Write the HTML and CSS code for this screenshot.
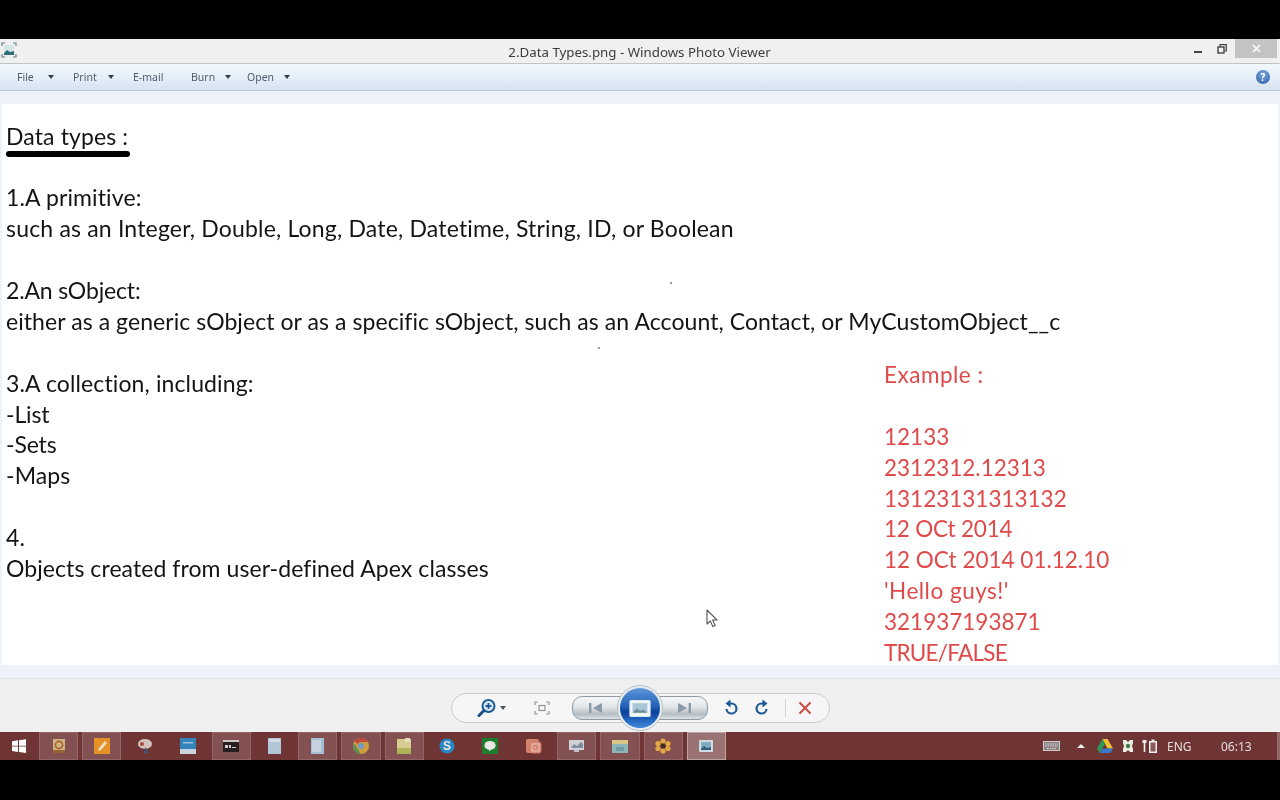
FILE: index.html
```html
<!DOCTYPE html>
<html lang="en">
<head>
<meta charset="utf-8">
<title>2.Data Types.png - Windows Photo Viewer</title>
<link rel="stylesheet" href="styles.css">
</head>
<body>
<div class="screen">
  <div class="letterbox-top"></div>
  <div class="window">
    <header class="titlebar">
      <svg class="app-icon" width="16" height="16" viewBox="0 0 16 16"><path d="M1 4V1h3M12 1h3v3M15 12v3h-3M4 15H1v-3" fill="none" stroke="#6d7f80" stroke-width="1.2"/><rect x="3" y="3" width="10" height="10" fill="#d5e6e6"/><path d="M3 11l3-3 3 2 4-1v4H3z" fill="#2f6f78"/></svg>
      <div class="title">2.Data Types.png - Windows Photo Viewer</div>
      <div class="window-controls">
        <div class="win-btn"><span class="min-glyph"></span></div>
        <div class="win-btn"><svg width="10" height="10" viewBox="0 0 10 10"><path d="M3 2.5V.7h6.3V7H7.5" fill="none" stroke="#444" stroke-width="1.2"/><rect x="1" y="3" width="6" height="6" fill="none" stroke="#444" stroke-width="1.4"/></svg></div>
        <div class="win-btn close"><svg width="9" height="9" viewBox="0 0 9 9"><path d="M1 1l7 7M8 1L1 8" stroke="#fff" stroke-width="1.5"/></svg></div>
      </div>
    </header>
    <nav class="menubar">
      <div class="menu-item file">File<i class="caret"></i></div>
      <div class="menu-item print">Print<i class="caret"></i></div>
      <div class="menu-item email">E-mail</div>
      <div class="menu-item burn">Burn<i class="caret"></i></div>
      <div class="menu-item open">Open<i class="caret"></i></div>
      <div class="help">?</div>
    </nav>
    <main class="viewer">
      <div class="page">
        <div class="col-left">
          <div class="line heading">Data types :</div>
          <div class="underline"></div>
          <div class="line gap-after-heading">1.A primitive:</div>
          <div class="line stretch">such as an Integer, Double, Long, Date, Datetime, String, ID, or Boolean</div>
          <div class="line blank"></div>
          <div class="line tighten">2.An sObject:</div>
          <div class="line squeeze">either as a generic sObject or as a specific sObject, such as an Account, Contact, or MyCustomObject__c</div>
          <div class="line blank"></div>
          <div class="line">3.A collection, including:</div>
          <div class="line tighten">-List</div>
          <div class="line tighten">-Sets</div>
          <div class="line">-Maps</div>
          <div class="line blank"></div>
          <div class="line">4.</div>
          <div class="line squeeze">Objects created from user-defined Apex classes</div>
        </div>
        <div class="col-right">
          <div class="line wider">Example :</div>
          <div class="line blank"></div>
          <div class="line">12133</div>
          <div class="line">2312312.12313</div>
          <div class="line">13123131313132</div>
          <div class="line narrower">12 OCt 2014</div>
          <div class="line">12 OCt 2014 01.12.10</div>
          <div class="line wider">'Hello guys!'</div>
          <div class="line">321937193871</div>
          <div class="line caps">TRUE/FALSE</div>
        </div>
        <span class="speck speck-a"></span>
        <span class="speck speck-b"></span>
        <svg class="cursor" width="14" height="20" viewBox="0 0 14 20"><path d="M1 1v14l3.4-3 2.4 5.6 2.4-1L6.6 11H11z" fill="#fff" stroke="#555" stroke-width="1.1" stroke-linejoin="round"/></svg>
      </div>
    </main>
    <footer class="controls">
      <div class="pill">
        <div class="ctl zoom">
          <svg width="20" height="20" viewBox="0 0 20 20"><circle cx="11.5" cy="8" r="6" fill="#dbeaf7" stroke="#1c5a96" stroke-width="2"/><path d="M7 12.5L2 17.5" stroke="#1c4f86" stroke-width="3" stroke-linecap="round"/><path d="M8.5 8h6M11.5 5v6" stroke="#1c5a96" stroke-width="1.8"/></svg>
          <i class="caret small"></i>
        </div>
        <div class="ctl fit">
          <svg width="16" height="14" viewBox="0 0 16 14"><path d="M1 4V1h3M12 1h3v3M15 10v3h-3M4 13H1v-3" fill="none" stroke="#8d959b" stroke-width="1.2"/><rect x="5" y="4.5" width="6" height="5" fill="none" stroke="#8d959b" stroke-width="1.2"/></svg>
        </div>
        <div class="nav-pill">
          <div class="nav-side"><svg width="16" height="12" viewBox="0 0 16 12"><rect x="1" y="1" width="2.4" height="10" fill="#8a9aa8"/><path d="M14 1v10L5 6z" fill="#8a9aa8"/></svg></div>
          <div class="nav-side next"><svg width="16" height="12" viewBox="0 0 16 12"><rect x="12.6" y="1" width="2.4" height="10" fill="#8a9aa8"/><path d="M2 1v10l9-5z" fill="#8a9aa8"/></svg></div>
          <div class="slideshow"><div class="slideshow-inner"><svg width="22" height="17" viewBox="0 0 20 16"><rect x="0.5" y="0.5" width="19" height="15" rx="1" fill="#f0f5f8" stroke="#dfe8ee"/><rect x="3" y="3" width="14" height="9" fill="#a9c6d6"/><path d="M3 12l4-4 3 2 3-1 4 3z" fill="#6d8f9c"/></svg></div></div>
        </div>
        <div class="ctl rotate">
          <svg width="16" height="18" viewBox="0 0 16 18"><path d="M5 4.5h3.5a5 5 0 1 1-5 5.5" fill="none" stroke="#1c5a96" stroke-width="2.2"/><path d="M7.5 0.5L2.5 4.5l5 4z" fill="#1c5a96"/></svg>
        </div>
        <div class="ctl rotate">
          <svg width="16" height="18" viewBox="0 0 16 18"><path d="M11 4.5H7.5a5 5 0 1 0 5 5.5" fill="none" stroke="#1c5a96" stroke-width="2.2"/><path d="M8.5 0.5l5 4-5 4z" fill="#1c5a96"/></svg>
        </div>
        <div class="divider"></div>
        <div class="ctl del">
          <svg width="14" height="14" viewBox="0 0 14 14"><path d="M1.5 1.5l11 11M12.5 1.5l-11 11" stroke="#cb4a45" stroke-width="2"/></svg>
        </div>
      </div>
    </footer>
  </div>
  <div class="taskbar">
    <div class="start"><svg width="14" height="14" viewBox="0 0 14 14"><path d="M0 2.2l6-.9v5.4H0zM7 1.2l7-1v6.5H7zM0 7.6h6v5.3l-6-.9zM7 7.6h7V14l-7-1z" fill="#fff"/></svg></div>
    <div class="tasks">
      <div class="task on"><svg width="14" height="16" viewBox="0 0 14 16"><rect x="1" y="1" width="12" height="14" fill="#d8c08e"/><circle cx="7" cy="7" r="3.6" fill="none" stroke="#b5651d" stroke-width="1.6"/><rect x="1" y="12" width="12" height="3" fill="#9b6a2c"/></svg></div>
      <div class="task on"><svg width="16" height="16" viewBox="0 0 16 16"><rect width="16" height="16" fill="#f29a1f"/><path d="M4 13l1-3 6-7 2 2-6 7z" fill="#fff2d5"/></svg></div>
      <div class="task"><svg width="16" height="16" viewBox="0 0 16 16"><ellipse cx="8" cy="6" rx="7" ry="5" fill="#e0d5d0"/><circle cx="5" cy="6" r="2" fill="#b84a3a"/><path d="M8 9l4 6H7z" fill="#3d5a78"/></svg></div>
      <div class="task"><svg width="16" height="16" viewBox="0 0 16 16"><rect width="16" height="16" fill="#2b8fd0"/><rect y="11" width="16" height="5" fill="#d8eaf5"/><rect x="3" y="4" width="10" height="1.5" fill="#a8d6f2"/></svg></div>
      <div class="task on"><svg width="16" height="12" viewBox="0 0 16 12"><rect width="16" height="12" fill="#1a1a1a"/><rect width="16" height="2" fill="#d8d8d8"/><path d="M2 5h3v3H2zM6 5h2v3H6zM9 7h4v1H9z" fill="#ddd"/></svg></div>
      <div class="task"><svg width="13" height="16" viewBox="0 0 13 16"><rect width="13" height="16" fill="#b9daee"/><rect x="1" y="1" width="11" height="3" fill="#e6f2f8"/></svg></div>
      <div class="task on"><svg width="13" height="16" viewBox="0 0 13 16"><rect width="13" height="16" fill="#a9cfe6"/><rect x="1" y="2" width="9" height="12" fill="#cfe5f2"/></svg></div>
      <div class="task on"><svg width="16" height="16" viewBox="0 0 16 16"><circle cx="8" cy="8" r="8" fill="#d9a83a"/><path d="M8 0a8 8 0 0 1 7 4H8a4 4 0 0 0-3.5 2L1.5 3A8 8 0 0 1 8 0z" fill="#c9463d"/><path d="M0.8 5l3.4 5.5L8 16A8 8 0 0 1 .8 5z" fill="#4c9a52"/><circle cx="8" cy="8" r="3" fill="#6fa5d8"/></svg></div>
      <div class="task on"><svg width="14" height="16" viewBox="0 0 14 16"><rect y="1" width="14" height="15" fill="#e4de9a"/><rect y="10" width="14" height="6" fill="#b7c25a"/><rect x="8" width="5" height="4" fill="#f5f1cf"/></svg></div>
      <div class="task"><svg width="16" height="16" viewBox="0 0 16 16"><circle cx="8" cy="8" r="7.5" fill="#1d93d6"/><text class="skype" x="8" y="12" text-anchor="middle">S</text></svg></div>
      <div class="task"><svg width="16" height="16" viewBox="0 0 16 16"><rect width="16" height="16" fill="#128a2c"/><ellipse cx="8" cy="7.4" rx="5.6" ry="4.4" fill="#fff"/><path d="M7 11h2.500L7 13.500z" fill="#fff"/></svg></div>
      <div class="task"><svg width="16" height="16" viewBox="0 0 16 16"><rect y="1" width="13" height="14" rx="2" fill="#e58e76"/><rect x="4" y="4" width="11" height="11" rx="2" fill="#efb5a4" stroke="#d9765c"/><circle cx="9.500" cy="9.500" r="2" fill="none" stroke="#d9765c"/></svg></div>
      <div class="task on"><svg width="16" height="16" viewBox="0 0 16 16"><rect y="2" width="15" height="10" fill="#dbe4ea"/><path d="M2 10l3-4 3 2 4-4 2 2v4H2z" fill="#7c97a8"/><rect x="5" y="12" width="5" height="2" fill="#c5d0d6"/></svg></div>
      <div class="task on"><svg width="16" height="14" viewBox="0 0 16 14"><rect y="1" width="16" height="13" fill="#e5d68c"/><rect y="5" width="16" height="9" fill="#8fc3c9"/><rect x="4" y="8" width="8" height="4" fill="#6da6ad"/></svg></div>
      <div class="task on"><svg width="16" height="16" viewBox="0 0 16 16"><g fill="#f1b640"><circle cx="8" cy="3" r="2.600"/><circle cx="8" cy="13" r="2.600"/><circle cx="3" cy="5.500" r="2.600"/><circle cx="13" cy="5.500" r="2.600"/><circle cx="3" cy="10.500" r="2.600"/><circle cx="13" cy="10.500" r="2.600"/></g><circle cx="8" cy="8" r="2.400" fill="#3a2318"/></svg></div>
      <div class="task on active"><svg width="14" height="12" viewBox="0 0 14 12"><rect width="14" height="12" rx="1" fill="#d8eaf3"/><rect x="2" y="2" width="10" height="8" fill="#7fb5cc"/><path d="M2 9l3-3 3 2 4-1v3H2z" fill="#205f78"/></svg></div>
    </div>
    <div class="tray">
      <svg class="t-kbd" width="17" height="10" viewBox="0 0 17 10"><rect x=".5" y=".5" width="16" height="9" fill="#8d8080" stroke="#ccc"/><path d="M2 3h13M2 5h13M4 7.500h9" stroke="#ddd" stroke-dasharray="1.500 1"/></svg>
      <i class="t-up"></i>
      <svg class="t-drive" width="16" height="14" viewBox="0 0 16 14"><path d="M5.500 0h5l5.500 9.500h-5.500z" fill="#f2c230"/><path d="M5.500 0L0 9.500 2.700 14 8 4.700z" fill="#2f9a57"/><path d="M2.700 14h10.600L16 9.500H5.500z" fill="#3b78c9"/></svg>
      <svg class="t-sync" width="12" height="14" viewBox="0 0 12 14"><path d="M1 1h3l2 2 2-2h3v3l-1 3 1 3v3H8L6 11l-2 2H1v-3l1-3-1-3z" fill="#e8efe6"/><circle cx="6" cy="7" r="2.200" fill="#4a7a52"/></svg>
      <svg class="t-batt" width="16" height="14" viewBox="0 0 16 14"><rect x="7" y="2" width="8" height="12" fill="#eee"/><rect x="9.500" y="0.500" width="3" height="2" fill="#eee"/><rect x="8.500" y="3.500" width="5" height="9" fill="#8a5a5a"/><rect x="0.500" y="1" width="4" height="3" fill="#eee"/><rect x="1.700" y="4" width="1.600" height="9" fill="#eee"/></svg>
      <span class="t-lang">ENG</span>
      <span class="t-clock">06:13</span>
      <span class="t-show"></span>
    </div>
  </div>
  <div class="letterbox-bottom"></div>
</div>
</body>
</html>
```

FILE: styles.css
```css
* { box-sizing: border-box; }
html, body { margin: 0; padding: 0; background: #000; }
body { width: 1280px; height: 800px; overflow: hidden; font-family: "Noto Sans", "Open Sans", sans-serif; }
.screen { width: 1280px; height: 800px; display: flex; flex-direction: column; filter: blur(0.45px); }
.letterbox-top { height: 39px; background: #000; flex: none; }
.letterbox-bottom { height: 40px; background: #000; flex: none; }
.window { height: 693px; flex: none; display: flex; flex-direction: column; background: #f0f0f0; }

.titlebar { height: 25px; flex: none; display: flex; align-items: center; position: relative; background: #f0f0f0; border-bottom: 1px solid #bfc4c8; }
.app-icon { margin-left: 1px; margin-top: -2px; }
.title { position: absolute; left: 0; right: 0; top: 5px; text-align: center; font-size: 13.300px; line-height: 16px; color: #3c3c3c; padding-right: 1px; }
.window-controls { margin-left: auto; display: flex; height: 100%; padding-right: 3px; position: relative; align-items: flex-start; }
.win-btn { width: 24px; height: 20px; display: flex; align-items: center; justify-content: center; }
.win-btn.close { width: 42px; height: 19px; margin-left: 1px; background: #c3c3c3; }
.min-glyph { display: block; width: 8px; height: 2px; background: #444; margin-top: 5px; }

.menubar { height: 27px; flex: none; position: relative; display: flex; align-items: center; background: linear-gradient(#f3f8fd, #e7f0f9 45%, #d6e4f0); border-bottom: 1px solid #b6c7d6; font-size: 10.500px; color: #4e5d6c; }
.menu-item { display: flex; align-items: center; white-space: nowrap; }
.menu-item.file { margin-left: 17px; width: 56px; }
.menu-item.print { width: 60px; }
.menu-item.email { width: 58px; }
.menu-item.burn { width: 56px; }
.menu-item.open { width: 60px; }
.file .caret { margin-left: 14px; }
.print .caret { margin-left: 11px; }
.burn .caret { margin-left: 10px; }
.open .caret { margin-left: 10px; }
.caret { display: block; width: 0; height: 0; border-left: 3.500px solid transparent; border-right: 3.500px solid transparent; border-top: 4px solid #33404c; }
.caret.small { border-top-color: #4a5560; border-left-width: 3px; border-right-width: 3px; margin-left: 3px; }
.help { margin-left: auto; margin-right: 10px; width: 14px; height: 14px; border-radius: 50%; background: radial-gradient(circle at 50% 30%, #7ea6dc, #2b5ca6); color: #fff; font-size: 10px; font-weight: 700; line-height: 14px; text-align: center; }

.viewer { height: 587px; flex: none; background: #eef3fa; padding: 13px 2px 13px 2px; }
.page { height: 561px; background: #fff; position: relative; display: flex; padding: 17.500px 0 0 4px; font-family: Lato, "Liberation Sans", sans-serif; font-size: 22.500px; color: #141414; overflow: hidden; }
.col-left { width: 878px; flex: none; font-size: 23px; letter-spacing: 0.12px; margin-top: -1px; }
.col-right { padding-top: 238.500px; color: #e04a4a; }
.line { line-height: 30.900px; height: 30.900px; white-space: nowrap; }
.stretch { letter-spacing: 0.18px; }
.squeeze { letter-spacing: 0.07px; }
.tighten { letter-spacing: -0.15px; }
.wider { letter-spacing: 0.5px; }
.narrower { letter-spacing: -0.2px; }
.caps { letter-spacing: -0.75px; }
.underline { width: 124px; height: 6px; margin-top: 0; background: #000; border-radius: 3px; }
.gap-after-heading { margin-top: 24.900px; }
.speck { position: absolute; width: 2px; height: 2px; background: #777; border-radius: 50%; }
.speck-a { left: 668px; top: 178px; }
.speck-b { left: 596px; top: 243px; }
.cursor { position: absolute; left: 704px; top: 505px; }

.controls { height: 54px; flex: none; display: flex; justify-content: center; align-items: flex-start; padding-top: 14px; border-top: 1px solid #e2e2e2; background: #f0f0f0; }
.pill { width: 379px; height: 30px; margin-left: 1px; border: 1px solid #c6ccd0; border-radius: 15px; background: #f6f6f6; display: flex; align-items: center; }
.ctl { display: flex; align-items: center; justify-content: center; flex: none; }
.ctl.zoom { width: 34px; margin-left: 22px; }
.ctl.fit { width: 16px; margin-left: 26px; }
.nav-pill { width: 136px; height: 24px; margin-left: 22px; position: relative; display: flex; justify-content: space-between; border: 1px solid #8f9aa2; border-radius: 10px; background: linear-gradient(#f5f6f6, #e3e6e8 45%, #b5bdc3 78%, #dfe3e5); }
.nav-side { width: 46px; display: flex; align-items: center; justify-content: center; }
.nav-side.next { justify-content: center; }
.slideshow { position: absolute; left: 44px; top: -12px; width: 46px; height: 46px; border-radius: 50%; background: #e9edf0; border: 1px solid #b9c2c9; display: flex; align-items: center; justify-content: center; }
.slideshow-inner { width: 40px; height: 40px; border-radius: 50%; background: linear-gradient(#5d97d9, #1e5fb5 48%, #0a3f9c 60%, #3f8be0); display: flex; align-items: center; justify-content: center; }
.ctl.rotate { width: 16px; margin-left: 15px; }
.ctl.rotate + .ctl.rotate { margin-left: 15px; }
.divider { width: 1px; height: 18px; background: #d0d0d0; margin-left: 15px; }
.ctl.del { width: 14px; margin-left: 12px; }

.taskbar { height: 28px; flex: none; display: flex; align-items: center; background: #6f3535; position: relative; }
.start { width: 37px; flex: none; display: flex; justify-content: center; }
.tasks { display: flex; height: 100%; flex: none; }
.task { width: 43.200px; height: 100%; display: flex; align-items: center; justify-content: center; position: relative; }
.task.on::before { content: ""; position: absolute; left: 2px; right: 2px; top: 0; bottom: 0; background: rgba(255,255,255,.14); border: 1px solid rgba(255,255,255,.13); }
.task.active::before { background: rgba(255,255,255,.3); border-color: rgba(255,255,255,.35); }
.task svg { position: relative; opacity: .88; }
.skype { font: 700 12px "Liberation Sans", sans-serif; fill: #fff; }
.tray { margin-left: auto; display: flex; align-items: center; height: 100%; color: #e5dcdc; font-size: 12px; }
.t-kbd { margin-right: 17px; }
.t-up { display: block; width: 0; height: 0; border-left: 4px solid transparent; border-right: 4px solid transparent; border-bottom: 4px solid #eee; margin-right: 12px; }
.t-drive { margin-right: 9px; }
.t-sync { margin-right: 8px; }
.t-batt { margin-right: 9px; }
.t-lang { width: 42px; }
.t-clock { width: 30px; margin-left: 12px; margin-right: 26px; }
.t-show { width: 3px; height: 100%; background: rgba(255,255,255,.25); margin-right: 0; }
```
